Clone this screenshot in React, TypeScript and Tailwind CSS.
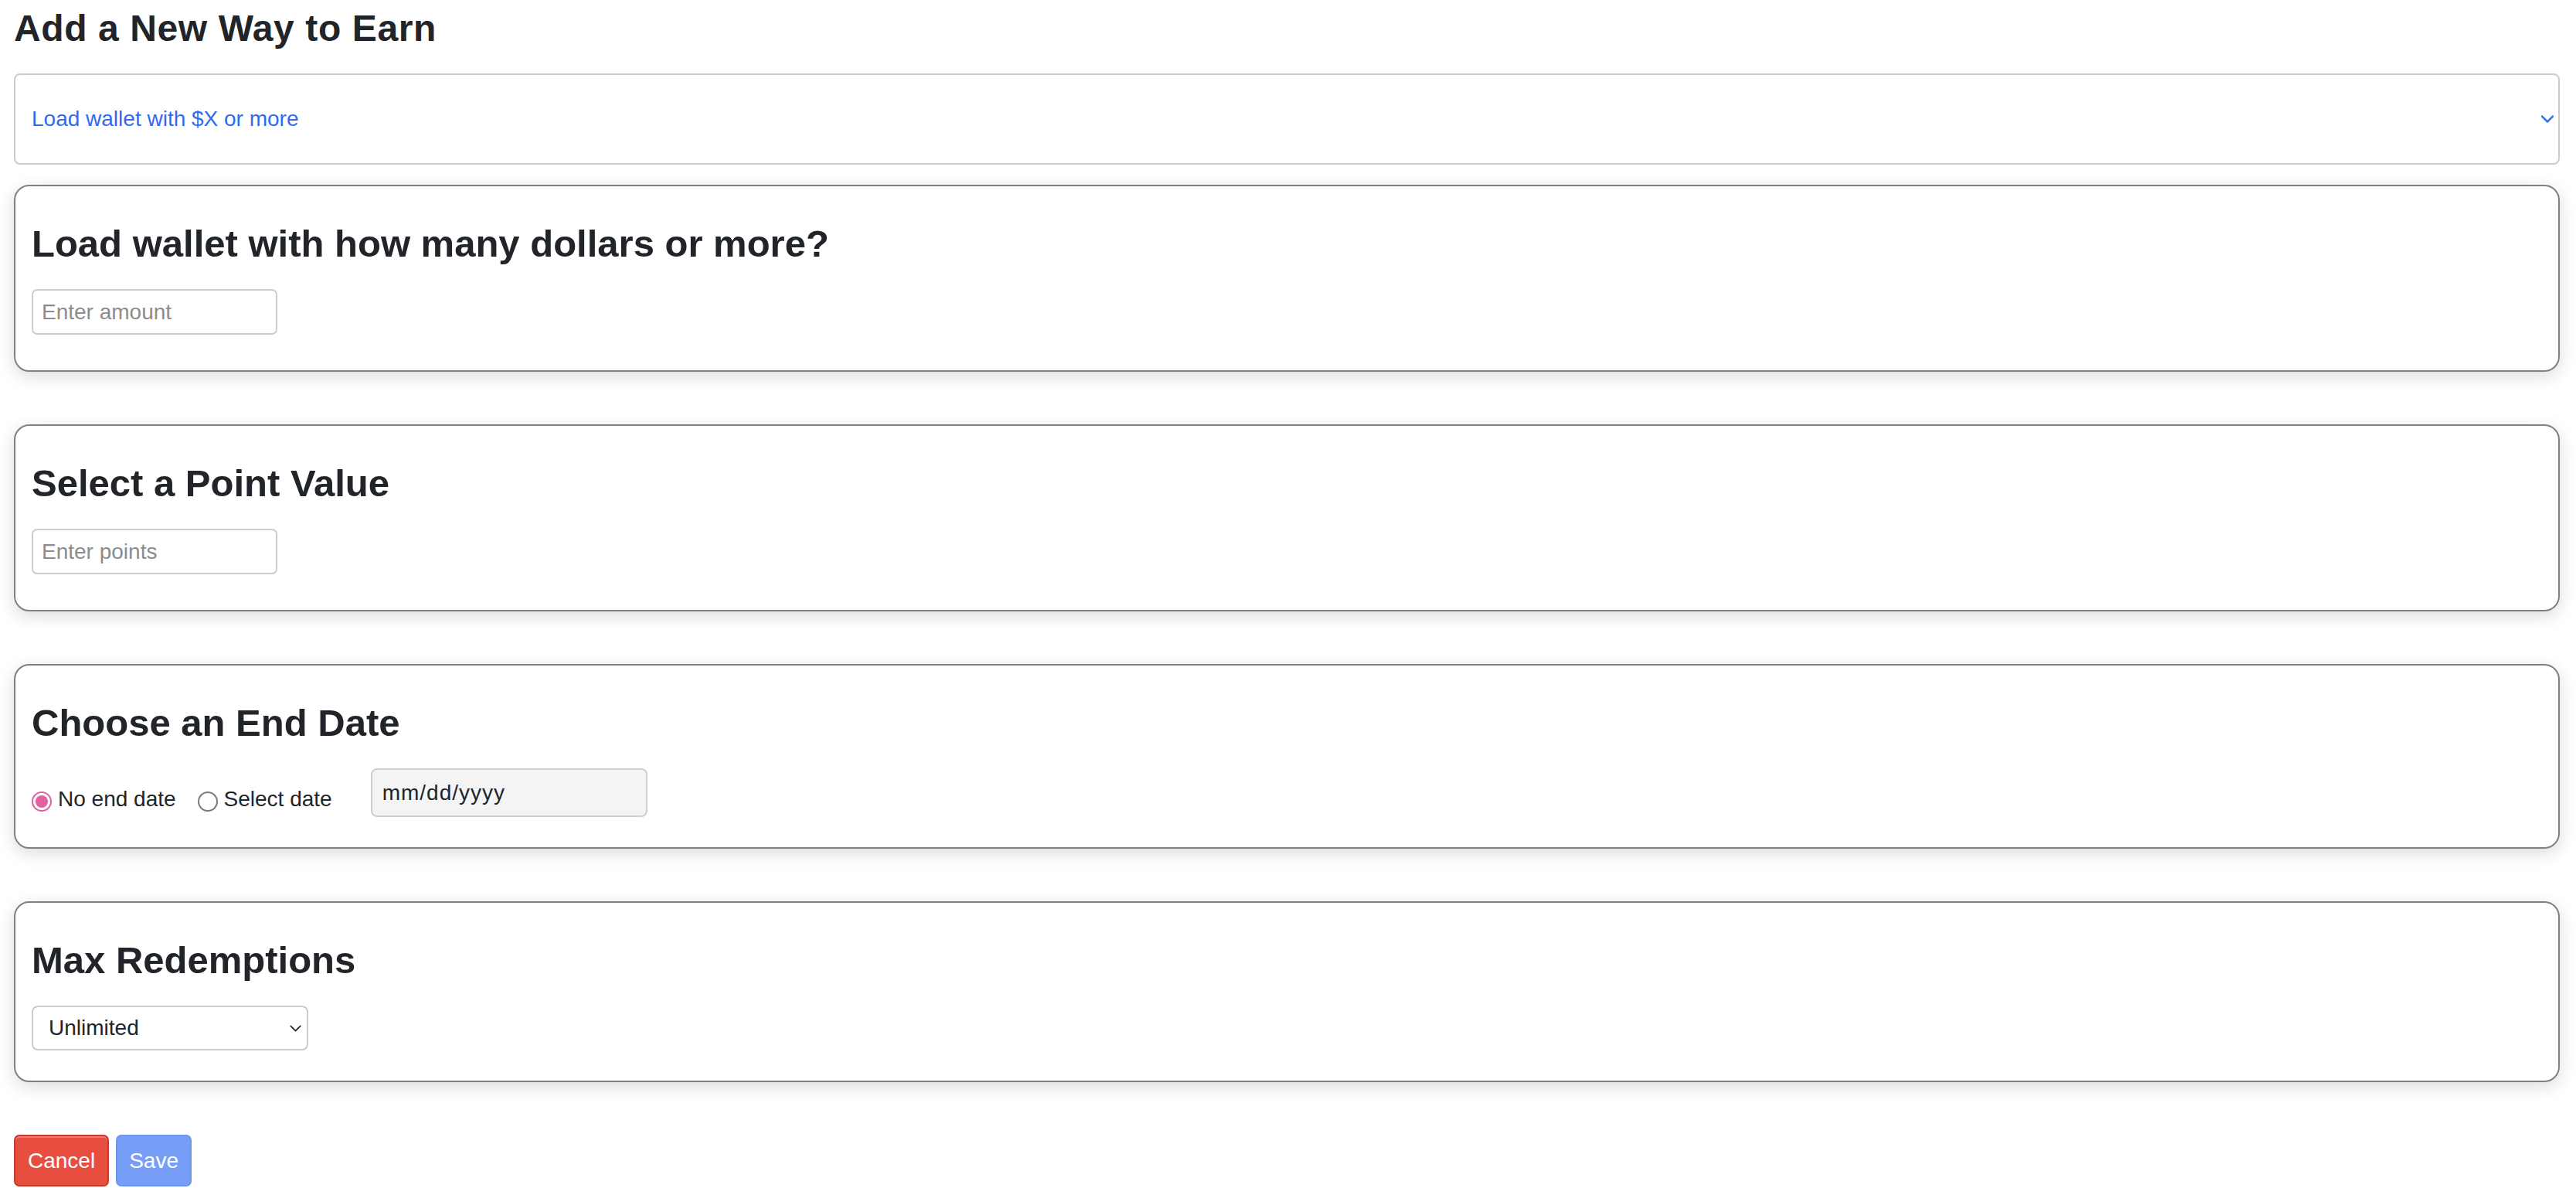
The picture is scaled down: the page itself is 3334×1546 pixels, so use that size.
import React, { useState } from 'react';

const Chevron: React.FC<{ className?: string; stroke: string; width?: number }> = ({ className, stroke, width = 2.5 }) => (
  <svg className={className} viewBox="0 0 16 10" fill="none">
    <path d="M1 1.5L8 8.5L15 1.5" stroke={stroke} strokeWidth={width} strokeLinecap="round" strokeLinejoin="round" />
  </svg>
);

const Radio: React.FC<{ checked: boolean; label: string; onClick: () => void }> = ({ checked, label, onClick }) => (
  <label className="flex items-center cursor-pointer" onClick={onClick}>
    <span
      className={
        checked
          ? 'mt-[6px] w-[26px] h-[26px] rounded-full border-2 border-[#e45f9e] bg-white flex items-center justify-center'
          : 'mt-[6px] w-[26px] h-[26px] rounded-full border-2 border-[#7a7a7a] bg-white'
      }
    >
      {checked && <span className="w-[16px] h-[16px] rounded-full bg-[#e4609e]" />}
    </span>
    <span className="ml-[8px] text-[28px] leading-[34px] text-[#212529]">{label}</span>
  </label>
);

const Card: React.FC<{ title: string; pb: string; children: React.ReactNode }> = ({ title, pb, children }) => (
  <div className={`border-2 border-[#808080] rounded-[20px] bg-white shadow-[0_6px_22px_rgba(0,0,0,0.14)] pl-[21px] pr-[21px] pt-[45px] ${pb}`}>
    <h3 className="text-[49px] leading-[59px] font-bold text-[#212529]">{title}</h3>
    <div className="mt-[29px]">{children}</div>
  </div>
);

const App: React.FC = () => {
  const [noEnd, setNoEnd] = useState(true);

  return (
    <div className="min-h-screen bg-white pl-[18px] pr-[21px] pt-[8px] pb-[20px]" style={{ fontFamily: '"Liberation Sans", Arial, sans-serif' }}>
      <h1 className="text-[48px] leading-[57px] font-bold text-[#212529] tracking-[0.6px]">Add a New Way to Earn</h1>

      <div className="relative mt-[30px]">
        <select className="w-full h-[118px] appearance-none border-2 border-[#cccccc] rounded-[8px] bg-white pl-[21px] text-[28px] text-[#2f6bf0] outline-none">
          <option>Load wallet with $X or more</option>
        </select>
        <Chevron className="absolute right-[8px] top-[54px] w-[16px] h-[10px] pointer-events-none" stroke="#3a73f2" />
      </div>

      <div className="mt-[26px] flex flex-col gap-[68px]">
        <Card title="Load wallet with how many dollars or more?" pb="pb-[46px]">
          <input
            className="w-[318px] h-[59px] border-2 border-[#cccccc] rounded-[7px] px-[11px] text-[28px] text-[#212529] placeholder:text-[#8c8c8c] outline-none"
            placeholder="Enter amount"
          />
        </Card>

        <Card title="Select a Point Value" pb="pb-[46px]">
          <input
            className="w-[318px] h-[59px] border-2 border-[#cccccc] rounded-[7px] px-[11px] text-[28px] text-[#212529] placeholder:text-[#8c8c8c] outline-none"
            placeholder="Enter points"
          />
        </Card>

        <Card title="Choose an End Date" pb="pb-[39px]">
          <div className="flex items-start">
            <div className="mt-[23px] flex items-center gap-[28px]">
              <Radio checked={noEnd} label="No end date" onClick={() => setNoEnd(true)} />
              <Radio checked={!noEnd} label="Select date" onClick={() => setNoEnd(false)} />
            </div>
            <div className="ml-[50px] w-[358px] h-[63px] border-2 border-[#cfcfcf] rounded-[8px] bg-[#f4f4f4] flex items-center pl-[13px] text-[28px] tracking-[1px] text-[#212529]">
              mm/dd/yyyy
            </div>
          </div>
        </Card>

        <Card title="Max Redemptions" pb="pb-[39px]">
          <div className="relative w-[358px]">
            <select className="w-[358px] h-[58px] appearance-none border-2 border-[#cccccc] rounded-[8px] bg-white pl-[20px] text-[28px] text-[#212529] outline-none">
              <option>Unlimited</option>
              <option>1</option>
              <option>5</option>
              <option>10</option>
            </select>
            <Chevron className="absolute right-[9px] top-[25px] w-[15px] h-[9px] pointer-events-none" stroke="#222222" width={1.8} />
          </div>
        </Card>
      </div>

      <div className="mt-[68px] flex gap-[9px]">
        <button className="h-[67px] px-[16px] rounded-[7px] border-2 border-[#c53b2e] bg-[#e84e3f] text-[28px] text-white shadow-[inset_0_2px_0_rgba(255,255,255,0.25)]">
          Cancel
        </button>
        <button className="h-[67px] px-[15px] rounded-[7px] border-2 border-[#6f96ee] bg-[#779ef6] text-[28px] text-white">
          Save
        </button>
      </div>
    </div>
  );
};

export default App;
